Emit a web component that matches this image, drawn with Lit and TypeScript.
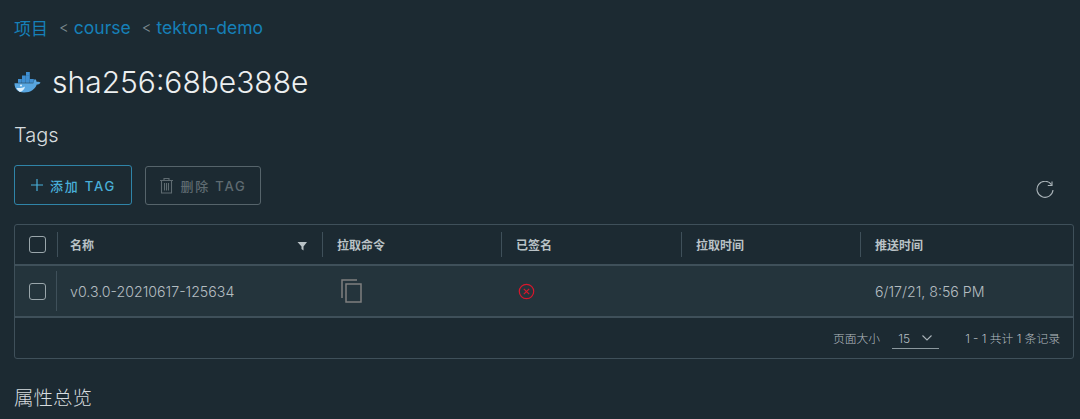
import { LitElement, html, css } from "lit";
import { customElement } from "lit/decorators.js";

@customElement("app-root")
export class AppRoot extends LitElement {
  static styles = css`
    :host { display: block; height: 419px; overflow: hidden; background: #1c2a32; font-family: Inter, "Noto Sans CJK SC", sans-serif; color: #e8eced; box-sizing: border-box; padding: 0 6px 0 14px; }
    * { box-sizing: border-box; }
    .crumbs { display: flex; align-items: center; height: 20px; margin-top: 17px; font-size: 17.5px; font-weight: 400; color: #1680b8; }
    .crumbs .cn { font-size: 17px; }
    .crumbs .sep { color: #7d8a90; margin: 0 5px 0 11px; font-size: 15px; font-weight: 300; }
    .title { display: flex; align-items: center; gap: 11px; height: 40px; margin-top: 25px; }
    .title svg { display: block; }
    .title h1 { margin: 0; font-size: 30px; font-weight: 300; color: #eceff0; }
    .tags { margin: 22px 0 0; height: 22px; line-height: 22px; font-size: 20px; font-weight: 300; color: #d6dcdf; }
    .actions { display: flex; align-items: center; gap: 13px; margin-top: 19px; height: 40px; }
    .btn { display: flex; align-items: center; justify-content: center; height: 40px; border-radius: 3px; border: 1px solid; font-size: 13px; font-weight: 500; letter-spacing: 1.8px; gap: 6px; }
    .btn.add { width: 118px; border-color: #2f84a8; color: #49afd9; }
    .btn.del { width: 116px; height: 39px; border-color: #56646b; color: #5f6b71; }
    .refresh { margin-left: auto; margin-right: 20px; margin-top: 10px; display: block; }
    .table { margin-top: 19px; height: 135px; border: 1px solid #3f505a; border-radius: 3px; }
    .row { display: grid; grid-template-columns: 42px 265px 179px 180px 179px 1fr; }
    .head { height: 41px; border-bottom: 2px solid #3f505a; font-size: 12px; font-weight: 700; color: #b9c2c6; }
    .body { height: 52px; background: #24343c; border-bottom: 2px solid #3f505a; font-size: 14.2px; font-weight: 300; color: #b4bdc1; }
    .cell { display: flex; align-items: center; height: 100%; padding: 7px 0; }
    .in { display: flex; align-items: center; justify-content: space-between; flex: 1; height: 100%; border-left: 1px solid #3f505a; padding: 0 14px; }
    .head .name-in { padding-left: 12px; }
    .body .cell { padding: 5px 0; }
    .body .in { border-left-color: transparent; }
    .head .cell.first, .body .cell.first { padding: 0 0 0 14px; }
    .body .name .in { border-left-color: #3f505a; margin-left: -1px; padding-left: 13px; }
    .box { width: 17px; height: 17px; border: 1px solid #9aa6ab; border-radius: 3px; }
    .filter { margin-top: 3px; }
    .foot { display: flex; align-items: center; justify-content: flex-end; height: 39px; font-size: 11.8px; font-weight: 300; color: #b4bdc1; padding-right: 13px; }
    .select { display: flex; align-items: center; justify-content: space-between; width: 47px; height: 23px; margin: 0 26px 0 12px; padding: 2px 7px 0 6px; border-bottom: 1px solid #8b989e; font-size: 12px; }
    .icon-copy { margin-left: 4px; }
    .signed { justify-content: flex-start; padding-left: 16px; }
    .sub { margin: 26px 0 0; height: 26px; line-height: 26px; font-size: 19.5px; font-weight: 300; color: #d6dcdf; }
  `;

  render() {
    return html`
      <div class="crumbs"><span class="cn">项目</span><span class="sep">&lt;</span><span>course</span><span class="sep">&lt;</span><span>tekton-demo</span></div>
      <div class="title">
        <svg width="27" height="21" viewBox="0 0 27 21">
          <g fill="#3f8fd2">
            <rect x="4" y="7" width="3.8" height="3.8"/><rect x="8" y="7" width="3.8" height="3.8"/><rect x="12" y="7" width="3.8" height="3.8"/>
            <rect x="8" y="3.5" width="3.8" height="3.8"/><rect x="12" y="3.5" width="3.8" height="3.8"/><rect x="12" y="0" width="3.8" height="3.8"/>
            <rect x="16" y="7" width="3.800" height="3.800"/>
          </g>
          <path fill="#58a6e0" d="M0.5 11.2h18.8c.6-.3.4-3 1.6-4.2 1 .7 1.7 1.9 1.8 3 1.2-.4 2.6-.3 3.8.5-.7 1.4-2 2-3.7 2C21 17 17 20.5 10 20.5 3.500 20.500.5 16.500.5 11.200z"/>
          <path fill="#dbeefa" d="M2.5 16c3 .4 6.5-.2 8.500-1.500-.5 2.800-2.500 5-5 5.400-1.500-.8-2.700-2.300-3.500-3.900z"/>
          <circle cx="7" cy="13.5" r="1" fill="#e8f4fb"/>
        </svg>
        <h1>sha256:68be388e</h1>
      </div>
      <div class="tags">Tags</div>
      <div class="actions">
        <div class="btn add">
          <svg width="14" height="14" viewBox="0 0 14 14"><path d="M7 1v12M1 7h12" stroke="#49afd9" stroke-width="1.2" fill="none"/></svg>
          <span>添加 TAG</span>
        </div>
        <div class="btn del">
          <svg width="15" height="17" viewBox="0 0 15 17" fill="none" stroke="#5f6b71" stroke-width="1.1"><path d="M1 3.5h13M5 3.5V1.5h5v2M2.5 3.5V16h10V3.5M5.5 6v7.5M7.500 6v7.500M9.500 6v7.500"/></svg>
          <span>删除 TAG</span>
        </div>
        <svg class="refresh" width="18" height="18" viewBox="0 0 18 18" fill="none" stroke="#aab4b9" stroke-width="1.1"><path d="M15.5 3.6A8 8 0 1 0 17 9"/><path d="M16 .5v4h-4.2"/></svg>
      </div>
      <div class="table">
        <div class="row head">
          <div class="cell first"><div class="box"></div></div>
          <div class="cell"><div class="in name-in"><span>名称</span>
            <svg class="filter" width="11" height="10" viewBox="0 0 11 10"><path d="M.5 1h9.500L6.500 5.500V9.500L4.500 8V5.500z" fill="#b9c2c6"/></svg></div></div>
          <div class="cell"><div class="in">拉取命令</div></div>
          <div class="cell"><div class="in">已签名</div></div>
          <div class="cell"><div class="in">拉取时间</div></div>
          <div class="cell"><div class="in">推送时间</div></div>
        </div>
        <div class="row body">
          <div class="cell first"><div class="box"></div></div>
          <div class="cell name"><div class="in">v0.3.0-20210617-125634</div></div>
          <div class="cell"><div class="in">
            <svg class="icon-copy" width="22" height="24" viewBox="0 0 22 24" fill="none" stroke="#7f7f7f" stroke-width="1.5"><path d="M16 1H1v18"/><rect x="5" y="5" width="15" height="18"/></svg>
          </div></div>
          <div class="cell"><div class="in signed">
            <svg width="17" height="17" viewBox="0 0 17 17" fill="none" stroke="#d8172c" stroke-width="1.2"><circle cx="8.5" cy="8.5" r="7.2"/><path d="M5.8 5.8l5.4 5.4M11.2 5.8l-5.4 5.4"/></svg>
          </div></div>
          <div class="cell"><div class="in"></div></div>
          <div class="cell"><div class="in">6/17/21, 8:56 PM</div></div>
        </div>
        <div class="foot">
          <span>页面大小</span>
          <div class="select"><span>15</span>
            <svg width="10" height="6" viewBox="0 0 10 6" fill="none" stroke="#aab4b9" stroke-width="1.1"><path d="M.5.5l4.5 4.5L9.5.5"/></svg>
          </div>
          <span>1 - 1 共计 1 条记录</span>
        </div>
      </div>
      <div class="sub">属性总览</div>
    `;
  }
}
